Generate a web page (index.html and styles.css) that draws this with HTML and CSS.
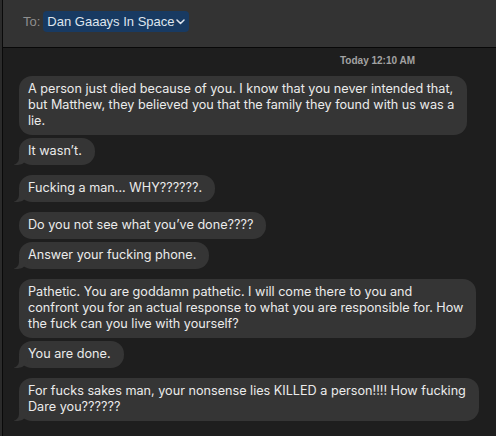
FILE: index.html
```html
<!DOCTYPE html>
<html>
<head>
<meta charset="utf-8">
<link rel="stylesheet" href="styles.css">
</head>
<body>
<div class="window">
  <header class="header">
    <span class="to-label">To:</span>
    <span class="token">Dan Gaaays In Space<svg class="chev" width="9" height="6" viewBox="0 0 9 6"><path d="M1 1 L4.5 4.5 L8 1" fill="none" stroke="#dfe5ee" stroke-width="1.5" stroke-linecap="round" stroke-linejoin="round"/></svg></span>
  </header>
  <main class="thread">
    <div class="stamp">Today 12:10 AM</div>
    <div class="group">
      <div class="bubble">A person just died because of you. I know that you never intended that,<br>but Matthew, they believed you that the family they found with us was a<br>lie.</div>
      <div class="bubble tail">It wasn’t.</div>
    </div>
    <div class="group">
      <div class="bubble tail">Fucking a man... WHY??????.</div>
    </div>
    <div class="group">
      <div class="bubble">Do you not see what you’ve done????</div>
      <div class="bubble tail">Answer your fucking phone.</div>
    </div>
    <div class="group">
      <div class="bubble">Pathetic. You are goddamn pathetic. I will come there to you and<br>confront you for an actual response to what you are responsible for. How<br>the fuck can you live with yourself?</div>
      <div class="bubble tail">You are done.</div>
    </div>
    <div class="group">
      <div class="bubble tail">For fucks sakes man, your nonsense lies KILLED a person!!!! How fucking<br>Dare you??????</div>
    </div>
  </main>
</div>
</body>
</html>
```

FILE: styles.css
```css
html, body {
  margin: 0;
  padding: 0;
  width: 496px;
  height: 436px;
  overflow: hidden;
  background: #2b2b2b;
  font-family: "Liberation Sans", Arial, sans-serif;
}

.window {
  margin-left: 2px;
  border-left: 1px solid #0a0a0a;
  height: 436px;
  display: flex;
  flex-direction: column;
  background: #1e1e1e;
}

.header {
  height: 48px;
  flex: none;
  box-sizing: border-box;
  background: #333333;
  border-bottom: 1px solid #080808;
  display: flex;
  align-items: center;
  padding-left: 20px;
  padding-bottom: 4px;
  gap: 3px;
}

.to-label {
  color: #8f8f8f;
  font-size: 13px;
}

.token {
  display: inline-flex;
  align-items: center;
  background: #183a62;
  color: #dfe5ee;
  font-size: 13px;
  height: 21px;
  padding: 0 4px 0 4px;
  border-radius: 4px;
}

.chev {
  margin-left: 1px;
  margin-top: 1px;
}

.thread {
  flex: 1;
  padding: 7px 0 0 16px;
  display: flex;
  flex-direction: column;
  gap: 10px;
}

.stamp {
  color: #a3a3a3;
  font-size: 10px;
  font-weight: 700;
  line-height: 12px;
  margin-left: 321px;
  margin-bottom: -1px;
}

.group {
  display: flex;
  flex-direction: column;
  align-items: flex-start;
  gap: 3px;
}

.bubble {
  position: relative;
  background: #353535;
  color: #ebebeb;
  font-family: "Inter", "Liberation Sans", sans-serif;
  font-size: 12.65px;
  line-height: 16px;
  white-space: nowrap;
  padding: 5px 13px 6px 9px;
  border-radius: 13px;
}

.tail::before {
  content: "";
  position: absolute;
  left: -5px;
  bottom: 0;
  width: 14px;
  height: 12px;
  background: #353535;
  border-bottom-right-radius: 10px;
  z-index: 0;
}

.tail::after {
  content: "";
  position: absolute;
  left: -9px;
  bottom: 0;
  width: 9px;
  height: 13px;
  background: #1e1e1e;
  border-bottom-right-radius: 7px;
  z-index: 1;
}
```
